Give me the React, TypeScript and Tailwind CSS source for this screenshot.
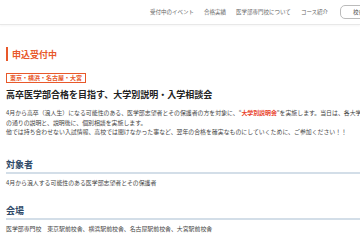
export default function App() {
  const nav = ["受付中のイベント", "合格実績", "医学部専門校について", "コース紹介"]

  return (
    <div
      className="w-full h-[240px] overflow-hidden bg-white text-[#333]"
      style={{ fontFamily: '"Noto Sans CJK JP", "Noto Sans", sans-serif' }}
    >
      <header className="h-[25px] border-b border-[#e8e8e8] shadow-[0_1px_2px_rgba(0,0,0,0.04)] flex items-center pl-[150px] whitespace-nowrap">
        <nav className="flex items-center gap-[10px] text-[5.5px] text-[#666]">
          {nav.map((item) => (
            <span key={item}>{item}</span>
          ))}
        </nav>
        <button className="ml-[12px] h-[14px] w-[60px] shrink-0 rounded-[5px] border border-[#bbb] text-[5.5px] text-left pl-[12px] text-[#444]">
          校舎案内
        </button>
      </header>

      <main className="px-[6px] pt-[22px] w-[600px]">
        <h2 className="flex items-center gap-[4px] h-[14px]">
          <span className="w-[2px] h-[14px] bg-[#e8582a]" />
          <span className="text-[9px] font-bold text-[#e8582a] leading-none">申込受付中</span>
        </h2>

        <div className="mt-[12px] inline-flex items-center h-[10px] px-[3px] border border-[#e8582a] text-[6px] font-bold text-[#e8582a] leading-none">
          東京・横浜・名古屋・大宮
        </div>

        <h1 className="mt-[3px] text-[9px] font-bold text-[#222] leading-[13px] whitespace-nowrap">
          高卒医学部合格を目指す、大学別説明・入学相談会
        </h1>

        <div className="mt-[7px] text-[5.9px] leading-[9.5px] text-[#444] whitespace-nowrap">
          <p>
            4月から高卒（浪人生）になる可能性のある、医学部志望者とその保護者の方を対象に、“
            <span className="text-[#e8402a] font-bold">大学別説明会</span>
            ”を実施します。当日は、各大学の入試傾向と対策
          </p>
          <p>の通りの説明と、説明後に、個別相談を実施します。</p>
          <p>他では持ち合わせない入試情報、高校では聞けなかった事など、翌年の合格を確実なものにしていくために、ご参加ください！！</p>
        </div>

        <section className="mt-[22px]">
          <h3 className="text-[9px] font-bold text-[#2f4a68] leading-[12px] pb-[1px] border-b-2 border-[#d3dee8]">
            対象者
          </h3>
          <p className="mt-[4px] text-[5.9px] leading-[9px] text-[#444] whitespace-nowrap">
            4月から浪人する可能性のある医学部志望者とその保護者
          </p>
        </section>

        <section className="mt-[18px]">
          <h3 className="text-[9px] font-bold text-[#2f4a68] leading-[12px] pb-[1px] border-b-2 border-[#d3dee8]">
            会場
          </h3>
          <p className="mt-[4px] text-[5.9px] leading-[9px] text-[#444] whitespace-nowrap">
            医学部専門校　東京駅前校舎、横浜駅前校舎、名古屋駅前校舎、大宮駅前校舎
          </p>
        </section>
      </main>
    </div>
  )
}
